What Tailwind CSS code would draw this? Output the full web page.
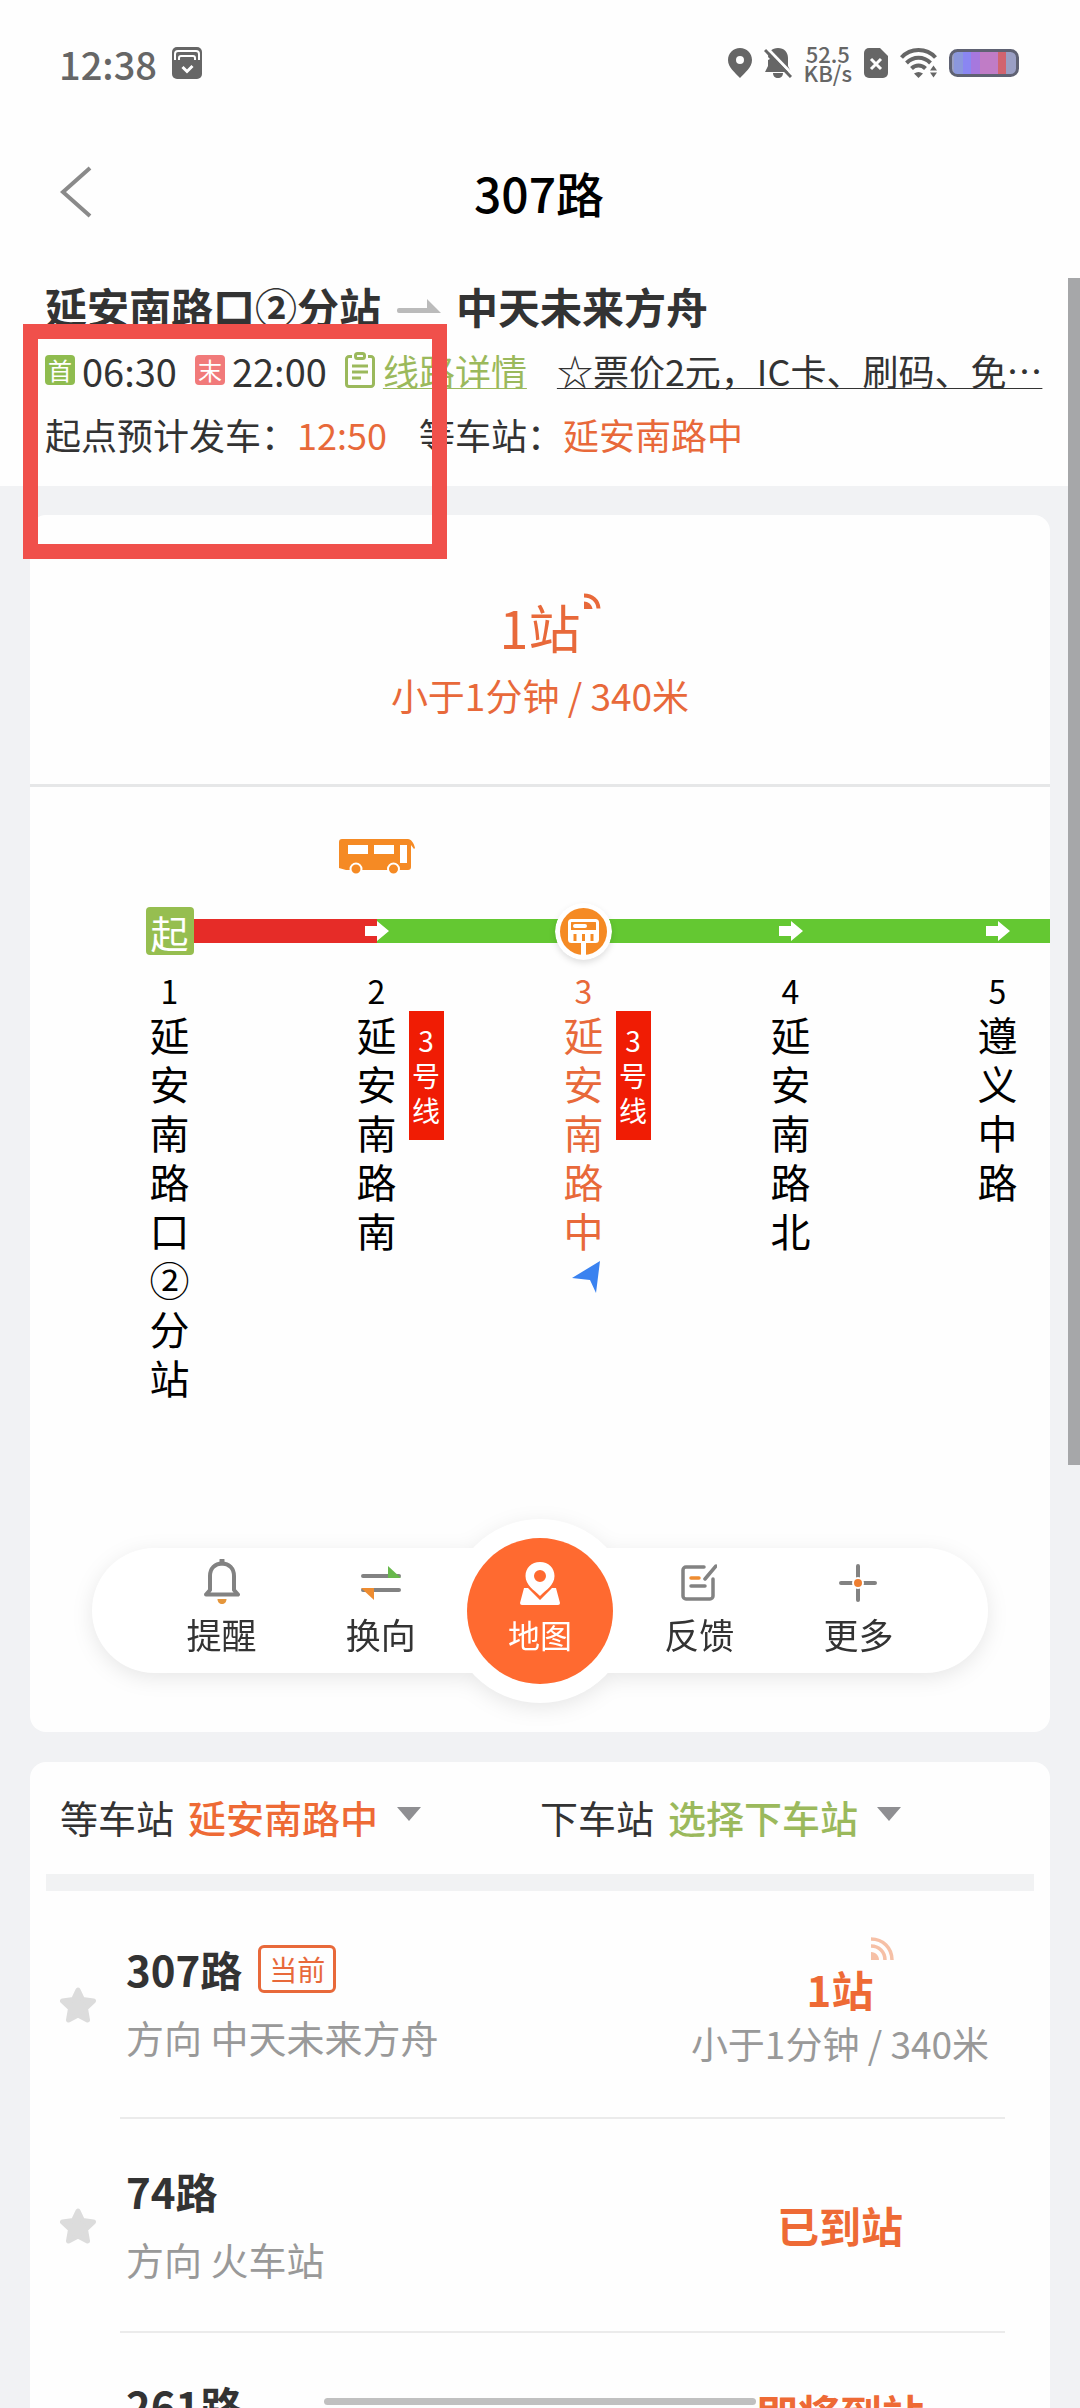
<!DOCTYPE html>
<html lang="zh-CN">
<head>
  <meta charset="utf-8"/>
  <meta content="width=device-width, initial-scale=1" name="viewport"/>
  <title>307路</title>
  <script src="https://cdn.jsdelivr.net/npm/@tailwindcss/browser@4"></script>
</head>
<body class="relative h-screen overflow-hidden bg-[#f1f2f4] font-['Noto_Sans_CJK_SC',sans-serif] text-[#333]">

  <!-- Header -->
  <header class="bg-[#fefefe]">
    <!-- Status bar -->
    <div class="flex h-[126px] items-center justify-between pl-[59px] pr-[61px] text-[#666]">
      <div class="flex items-center gap-[15px]">
        <span class="text-[38px] font-medium">12:38</span>
        <svg class="h-8 w-[30px]" viewBox="0 0 30 32" fill="none">
          <rect width="30" height="32" rx="5" fill="#666"/>
          <path d="M3 13V7a3 3 0 0 1 3-3h18a3 3 0 0 1 3 3v6" stroke="#fff" stroke-width="2"/>
          <path d="M7 13v-2a2 2 0 0 1 2-2h12a2 2 0 0 1 2 2v2" stroke="#fff" stroke-width="2"/>
          <path d="M10.500 20l4.500 4.500 5.500-5.500" stroke="#fff" stroke-width="3"/>
        </svg>
      </div>
      <div class="flex items-center gap-3">
        <svg class="h-[30px] w-6" viewBox="0 0 24 30"><path fill="#666" fill-rule="evenodd" d="M12 0C5.200 0 0 5.200 0 12c0 7.500 7 12.500 12 18 5-5.500 12-10.500 12-18C24 5.200 18.800 0 12 0zm0 8a4 4 0 1 1 0 8 4 4 0 0 1 0-8z"/></svg>
        <svg class="h-[30px] w-7" viewBox="0 0 28 30">
          <path fill="#666" d="M14 0c6 0 10 4 10 10v8l3 6H1l3-6v-8C4 4 8 0 14 0zM9 25h10c0 3-2 5-5 5s-5-2-5-5z"/>
          <path d="M3 0l26 27" stroke="#fff" stroke-width="3"/>
          <path d="M1 2l26 27" stroke="#666" stroke-width="3"/>
          <path d="M-2 3l0 12 8-4z" fill="#fff"/>
        </svg>
        <div class="text-center text-[22px] leading-[19px] font-medium">
          <div>52.5</div>
          <div>KB/s</div>
        </div>
        <svg class="h-[30px] w-6" viewBox="0 0 24 30" fill="none">
          <path fill="#666" d="M5 0h11l8 8v17a5 5 0 0 1-5 5H5a5 5 0 0 1-5-5V5a5 5 0 0 1 5-5z"/>
          <path d="M7 11l10 10M17 11L7 21" stroke="#fff" stroke-width="3"/>
        </svg>
        <svg class="h-[30px] w-[37px]" viewBox="0 0 37 30" fill="none" stroke="#666" stroke-width="4">
          <path d="M1.500 9.500c9-10 25-10 34 0"/>
          <path d="M6.500 15c7-7 17-7 24 0"/>
          <path d="M11.500 20.500c4-4 10-4 14 0"/>
          <path d="M14 25.500c3-2 6-2 9 0L18.500 30z" fill="#666" stroke="none"/>
          <path d="M30 22.500l3.500-5 3.500 5zM30 24.500h7l-3.500 5z" fill="#666" stroke="none"/>
        </svg>
        <svg class="h-7 w-[70px]" viewBox="0 0 70 28">
          <rect x="1.500" y="1.500" width="67" height="25" rx="7" fill="#9a9fc4"/>
          <rect x="5" y="3" width="9" height="22" fill="#8b97dc"/>
          <rect x="14" y="3" width="8" height="22" fill="#8a86f2"/>
          <rect x="22" y="3" width="9" height="22" fill="#a678de"/>
          <rect x="31" y="3" width="18" height="22" fill="#c07cc6"/>
          <rect x="49" y="3" width="8" height="22" fill="#d1646f"/>
          <rect x="1.500" y="1.500" width="67" height="25" rx="7" fill="none" stroke="#5f6273" stroke-width="3"/>
        </svg>
      </div>
    </div>

    <!-- Title bar -->
    <div class="grid h-[131px] grid-cols-[1fr_auto_1fr] items-center pr-[62px] pl-[60px]">
      <button type="button" aria-label="返回" class="justify-self-start">
        <svg class="h-[52px] w-8" viewBox="0 0 32 52" fill="none" stroke="#8a8a8a" stroke-width="4"><path d="M30 2L3 26l27 24"/></svg>
      </button>
      <h1 class="text-5xl font-medium text-black">307路</h1>
    </div>

    <!-- Route info -->
    <div class="pt-[21px] pr-[30px] pb-7 pl-[45px] whitespace-nowrap">
      <h2 class="flex items-center text-[42px] leading-[56px] font-bold">
        延安南路口②分站
        <svg class="mr-[15px] ml-4 h-4 w-11" viewBox="0 0 44 16" fill="#bbb"><path d="M2 10h28V1l14 14H2a2 2 0 0 1-2-2v-1a2 2 0 0 1 2-2z"/></svg>
        中天未来方舟
      </h2>
      <div class="mt-3 flex h-12 items-center text-[38px]">
        <span class="flex size-[30px] shrink-0 items-center justify-center rounded bg-[#8fbc4f] text-2xl text-white">首</span>
        <span class="ml-[7px]">06:30</span>
        <span class="ml-[18px] flex size-[30px] shrink-0 items-center justify-center rounded bg-[#f17a7a] text-2xl text-white">末</span>
        <span class="ml-[7px]">22:00</span>
        <svg class="ml-[18px] h-9 w-[30px] shrink-0" viewBox="0 0 30 36" fill="none" stroke="#9bb95c" stroke-width="3">
          <path d="M7 4.500H4a2.500 2.500 0 0 0-2.500 2.500v25A2.500 2.500 0 0 0 4 34.500h22a2.500 2.500 0 0 0 2.500-2.500V7A2.500 2.500 0 0 0 26 4.500h-3"/>
          <rect x="10.500" y="1.500" width="9" height="5" rx="2"/>
          <path d="M7 14h16M7 20h16M7 26h9"/>
        </svg>
        <a href="#" class="ml-2 text-4xl text-[#9bb95c] underline decoration-1 underline-offset-2">线路详情</a>
        <a href="#" class="ml-[30px] text-4xl underline decoration-1 underline-offset-2">☆票价2元，IC卡、刷码、免…</a>
      </div>
      <div class="mt-4 flex h-12 items-center text-4xl">
        <span>起点预计发车：</span>
        <span class="text-[#e8693a]">12:50</span>
        <span class="ml-8">等车站：</span>
        <span class="text-[#e8693a]">延安南路中</span>
      </div>
    </div>
  </header>

  <main class="space-y-[30px] px-[30px] pt-[29px]">
    <!-- Live arrival and line map -->
    <section class="rounded-2xl bg-[#fefefe]">
      <div class="border-b-3 border-[#e6e7e8] pt-[76px] pb-[65px] text-center text-[#e8693a]">
        <div class="text-[52px] leading-[72px]">
          <span class="relative">1站
            <svg class="absolute top-1 left-full ml-1 h-4 w-[17px]" viewBox="0 0 17 16" fill="none" stroke="#e8693a" stroke-width="4"><path d="M0 2.500c8 0 14 5 14.500 13"/><path d="M0 8.500c4 0 8 3 8.500 7.500H0z" fill="#e8693a" stroke="none"/></svg>
          </span>
        </div>
        <p class="mt-2 text-[37px] leading-12">小于1分钟 / 340米</p>
      </div>

      <ol id="stations" class="flex overflow-hidden pt-[52px] pl-9 text-black"></ol>

      <div class="px-[62px] pt-[146px] pb-[59px]">
        <nav class="flex h-[125px] items-center rounded-full bg-white px-[50px] text-[35px] drop-shadow-[0_5px_10px_rgba(0,0,0,0.09)]">
          <button type="button" class="flex flex-1 flex-col items-center">
            <svg class="h-[46px] w-9" viewBox="0 0 36 46" fill="none" stroke="#828282" stroke-width="4" stroke-linejoin="round">
              <path d="M6 31V17C6 9.500 11 4.500 18 4.500S30 9.500 30 17v14l4 4.500H2z"/>
              <path d="M18 1v3" stroke-width="5" stroke-linecap="round"/>
              <path d="M13.500 40h9c0 3-2 5-4.500 5s-4.500-2-4.500-5z" fill="#e5963c" stroke="none"/>
            </svg>
            <span class="leading-[58px]">提醒</span>
          </button>
          <button type="button" class="flex flex-1 flex-col items-center">
            <svg class="h-[46px] w-10" viewBox="0 0 40 46" fill="none" stroke="#828282" stroke-width="4" stroke-linecap="round">
              <path d="M2 17h36M2 31h36"/>
              <path d="M27 7l13 12H27z" fill="#68b84c" stroke="none"/>
              <path d="M0 29h13v12z" fill="#ee8c30" stroke="none"/>
            </svg>
            <span class="leading-[58px]">换向</span>
          </button>
          <button type="button" class="-my-8 flex min-w-0 flex-1 justify-center text-[32px] text-white">
            <span class="flex size-[184px] shrink-0 items-center justify-center rounded-full bg-white">
              <span class="flex size-[146px] flex-col items-center justify-center rounded-full bg-[#ff6a30]">
                <svg class="h-[46px] w-10" viewBox="0 0 40 46" fill="#fff">
                  <path fill-rule="evenodd" d="M20 1C11.500 1 5.500 7 5.500 15c0 9 8.500 14 14.500 20 6-6 14.500-11 14.500-20C34.500 7 28.500 1 20 1zm0 8a6 6 0 1 1 0 12 6 6 0 0 1 0-12z"/>
                  <path d="M4 27h4l12 12 12-12h4l4 15q0 2-2 2H2q-2 0-2-2z"/>
                </svg>
                <span class="leading-[54px]">地图</span>
              </span>
            </span>
          </button>
          <button type="button" class="flex flex-1 flex-col items-center">
            <svg class="h-[46px] w-9" viewBox="0 0 36 46" fill="none" stroke="#828282" stroke-width="3.500" stroke-linecap="round">
              <path d="M23 8H5a3 3 0 0 0-3 3v26a3 3 0 0 0 3 3h24a3 3 0 0 0 3-3V20"/>
              <path d="M35 7L24 20M10 27h14"/>
              <path d="M10 19h8" stroke="#ee8c30"/>
            </svg>
            <span class="leading-[58px]">反馈</span>
          </button>
          <button type="button" class="flex flex-1 flex-col items-center">
            <svg class="h-[46px] w-10" viewBox="0 0 40 46" stroke="#828282" stroke-width="4" stroke-linecap="round">
              <path d="M20 7v34M3 24h34"/>
              <circle cx="20" cy="24" r="5" fill="#ee7e30" stroke="#fff" stroke-width="2"/>
            </svg>
            <span class="leading-[58px]">更多</span>
          </button>
        </nav>
      </div>
    </section>

    <!-- Lines at this stop -->
    <section class="rounded-t-2xl bg-[#fefefe]">
      <div class="flex h-28 items-center pb-1 text-[38px]">
        <div class="flex w-1/2 items-center pl-[30px]">
          <label for="from">等车站</label>
          <select id="from" class="ml-3.5 appearance-none font-medium text-[#ee6a35]"><option>延安南路中</option></select>
          <svg class="mb-1 ml-[18px] h-3.5 w-6" viewBox="0 0 24 14" fill="#8f8f92"><path d="M0 0h24L12 14z"/></svg>
        </div>
        <div class="flex w-1/2 items-center">
          <label for="to">下车站</label>
          <select id="to" class="ml-3.5 appearance-none font-medium text-[#9bb95c]"><option>选择下车站</option></select>
          <svg class="mb-1 ml-[18px] h-3.5 w-6" viewBox="0 0 24 14" fill="#8f8f92"><path d="M0 0h24L12 14z"/></svg>
        </div>
      </div>
      <div class="mx-4 h-[17px] bg-[#f1f2f3]"></div>
      <ul id="lines"></ul>
    </section>
  </main>

  <!-- Overlays -->
  <div class="absolute top-[278px] right-0 h-[1187px] w-3 bg-[#a6a7a9]"></div>
  <div class="absolute top-[324px] left-[23px] h-[235px] w-[424px] border-15 border-[#f0504b]"></div>
  <div class="absolute bottom-[3px] left-1/2 h-[7px] w-2/5 -translate-x-1/2 rounded-full bg-[#c0c0c0]"></div>

<script>
  const stations = [
    { name: '延安南路口②分站', left: 'bg-transparent', right: 'bg-[#e62c28]', node: 'start' },
    { name: '延安南路南', left: 'bg-[#e62c28]', right: 'bg-[#64c832]', node: 'arrow', metro: '3号线', bus: true },
    { name: '延安南路中', left: 'bg-[#64c832]', right: 'bg-[#64c832]', node: 'stop', metro: '3号线', current: true },
    { name: '延安南路北', left: 'bg-[#64c832]', right: 'bg-[#64c832]', node: 'arrow' },
    { name: '遵义中路', left: 'bg-[#64c832]', right: 'bg-[#64c832]', node: 'arrow' },
  ];

  const lines = [
    { name: '307路', to: '中天未来方舟', status: '1站', eta: '小于1分钟 / 340米', active: true },
    { name: '74路', to: '火车站', status: '已到站' },
    { name: '261路', to: '', status: '即将到站', eta: '&nbsp;' },
  ];

  const nodes = {
    start: '<span class="relative flex size-12 items-center justify-center rounded bg-[#96be50] text-[38px] text-white">起</span>',
    arrow: '<svg class="relative h-5 w-6" viewBox="0 0 24 20" fill="#fff"><path d="M0 5h12V0l12 10-12 10v-5H0z"/></svg>',
    stop: `
      <svg class="relative size-[57px] rounded-full drop-shadow-md" viewBox="0 0 57 57" fill="none">
        <circle cx="28.500" cy="28.500" r="28.500" fill="#fff"/>
        <circle cx="28.500" cy="28.500" r="23.500" fill="#f58a24"/>
        <rect x="14.500" y="17.500" width="28" height="21" rx="2" stroke="#fff" stroke-width="3"/>
        <rect x="18" y="21" width="14" height="4" rx="2" fill="#fff"/>
        <path d="M14 28.500h29" stroke="#fff" stroke-width="3"/>
        <path d="M16 34.500h25" stroke="#fff" stroke-width="9"/>
        <path d="M20 31v7M28.500 31v7M37 31v7" stroke="#f58a24" stroke-width="3"/>
        <path d="M28.500 40v14" stroke="#fff" stroke-width="5"/>
      </svg>`,
  };

  const bus = `
    <svg class="h-9 w-[76px]" viewBox="0 0 76 36">
      <path fill="#f58a24" d="M3 0h66c3 0 6 4 7 9l-1 1-3-4v22q0 3-3 3H7l-7-2V3q0-3 3-3z"/>
      <path fill="#fff" d="M9 6h20v9H9zM35 6h20v9H35zM61 6h7v18h-7z"/>
      <circle cx="17" cy="30" r="5.500" fill="#f58a24" stroke="#fff" stroke-width="2"/>
      <circle cx="54.500" cy="30" r="5.500" fill="#f58a24" stroke="#fff" stroke-width="2"/>
    </svg>`;

  document.getElementById('stations').innerHTML = stations.map((s, i) => `
    <li class="flex w-[207px] shrink-0 flex-col items-center ${s.current ? 'text-[#e8693a]' : ''}">
      <div class="h-[62px]">${s.bus ? bus : ''}</div>
      <div class="relative flex h-[60px] w-full items-center justify-center">
        <div class="absolute inset-x-0 flex h-6"><i class="w-1/2 ${s.left}"></i><i class="w-1/2 ${s.right}"></i></div>
        ${nodes[s.node]}
      </div>
      <div class="mt-[9px] text-[32px] leading-10">${i + 1}</div>
      <div class="relative w-10 text-[40px] leading-[49px] break-all">${s.name}
        ${s.metro ? `<span class="absolute top-px left-[52px] w-[35px] bg-[#f01c04] px-[3px] py-3 text-center text-[28px] leading-[35px] text-white">${s.metro}</span>` : ''}
      </div>
      ${s.current ? '<svg class="mt-1.5 ml-1 h-8 w-7" viewBox="0 0 28 32" fill="#3a82f0"><path d="M28 0L0 17l18 2 6 13z"/></svg>' : ''}
    </li>`).join('');

  document.getElementById('lines').innerHTML = lines.map(l => `
    <li class="group flex">
      <button type="button" aria-label="收藏" class="w-[90px] pl-[30px]">
        <svg class="size-9" viewBox="0 0 36 36" fill="#dcdcdc" stroke="#dcdcdc" stroke-width="5" stroke-linejoin="round"><path d="M18 3l4.500 9.500 11 1.500-8 7.500 2 11.500-9.500-5-9.500 5 2-11.500-8-7.500 11-1.500z"/></svg>
      </button>
      <div class="mr-[45px] flex flex-1 items-center justify-between border-b-2 border-[#ebebeb] py-11 pl-1.5 group-first:pt-[50px] group-first:pb-[52px]">
        <div class="space-y-3 leading-[56px]">
          <div class="flex items-center text-[42px] font-bold">${l.name}
            ${l.active ? '<span class="ml-4 flex h-12 items-center rounded-md border-3 border-[#e8693a] px-2 text-[28px] font-normal text-[#e8693a]">当前</span>' : ''}
          </div>
          <div class="text-[38px] text-[#999]">方向 ${l.to}</div>
        </div>
        <div class="-my-4 flex w-[330px] flex-col items-center">
          ${l.active ? '<svg class="ml-[84px] size-6" viewBox="0 0 24 24" fill="none" stroke="#f6c0a6" stroke-width="3.500"><path d="M1 2c12 0 21 9 21 21"/><path d="M1 9c8 0 14 6 14 14"/><path d="M1 15c5 0 8 4 8 8H1z" fill="#f6c0a6" stroke="none"/></svg>' : ''}
          <div class="text-[42px] leading-[56px] font-bold text-[#ee6a35]">${l.status}</div>
          ${l.eta ? `<div class="text-[37px] leading-[52px] whitespace-nowrap text-[#999]">${l.eta}</div>` : ''}
        </div>
      </div>
    </li>`).join('');
</script>
</body>
</html>
